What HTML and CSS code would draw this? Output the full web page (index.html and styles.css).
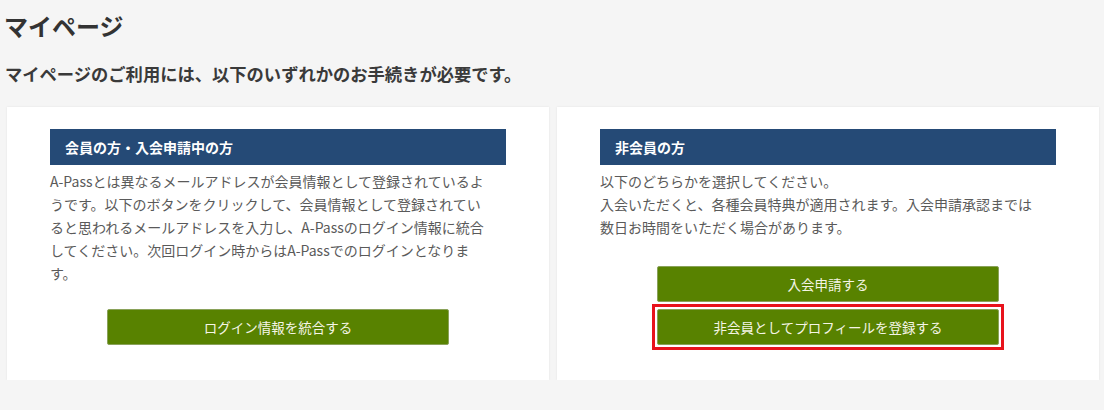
FILE: index.html
```html
<!DOCTYPE html>
<html lang="ja">
<head>
<meta charset="utf-8">
<title>マイページ</title>
<link rel="stylesheet" href="styles.css">
</head>
<body>
<div class="page">
  <h1 class="title">マイページ</h1>
  <p class="lead">マイページのご利用には、以下のいずれかのお手続きが必要です。</p>
  <div class="cards">
    <section class="card">
      <h2 class="card-head">会員の方・入会申請中の方</h2>
      <p class="card-text">A-Passとは異なるメールアドレスが会員情報として登録されているようです。以下のボタンをクリックして、会員情報として登録されていると思われるメールアドレスを入力し、A-Passのログイン情報に統合してください。次回ログイン時からはA-Passでのログインとなります。</p>
      <div class="actions">
        <a class="btn" href="#">ログイン情報を統合する</a>
      </div>
    </section>
    <section class="card">
      <h2 class="card-head">非会員の方</h2>
      <p class="card-text">以下のどちらかを選択してください。<br>入会いただくと、各種会員特典が適用されます。入会申請承認までは数日お時間をいただく場合があります。</p>
      <div class="actions">
        <a class="btn" href="#">入会申請する</a>
        <div class="marked">
          <a class="btn" href="#">非会員としてプロフィールを登録する</a>
        </div>
      </div>
    </section>
  </div>
</div>
</body>
</html>
```
FILE: styles.css
```css
* { box-sizing: border-box; }
html, body {
  margin: 0;
  padding: 0;
  background: #f5f5f5;
}
body {
  font-family: "Noto Sans CJK JP", "Noto Sans", sans-serif;
  color: #555;
}
.page {
  padding: 9px 5px 0 7px;
}
.title {
  margin: 0 0 0 -3px;
  font-size: 24px;
  line-height: 34px;
  font-weight: 700;
  color: #333;
}
.lead {
  margin: 18px 0 0 -2px;
  font-size: 17.3px;
  line-height: 26px;
  font-weight: 700;
  color: #3a3a3a;
}
.cards {
  margin-top: 20px;
  display: grid;
  grid-template-columns: 1fr 1fr;
  gap: 8px;
}
.card {
  background: #fff;
  box-shadow: 0 0 2px rgba(0, 0, 0, 0.08);
  padding: 22px 43px 35px;
  display: flex;
  flex-direction: column;
}
.card-head {
  margin: 0;
  height: 36px;
  padding: 0 15px;
  background: #254a76;
  color: #fff;
  font-size: 14px;
  font-weight: 700;
  line-height: 36px;
}
.card-text {
  margin: 5px 0 0;
  padding-right: 16px;
  font-size: 14px;
  line-height: 23px;
  color: #5a5a5a;
}
.actions {
  margin-top: auto;
  padding-top: 24px;
  display: flex;
  flex-direction: column;
  align-items: center;
}
.btn {
  display: block;
  width: 342px;
  height: 36px;
  background: #588200;
  border: 1px solid #8aa25a;
  border-radius: 2px;
  color: #f5f5e6;
  text-decoration: none;
  text-align: center;
  font-size: 13.5px;
  line-height: 34px;
}
.marked {
  margin: 2px 0 -5px;
  padding: 2px;
  border: 3px solid #e8131c;
}
```
